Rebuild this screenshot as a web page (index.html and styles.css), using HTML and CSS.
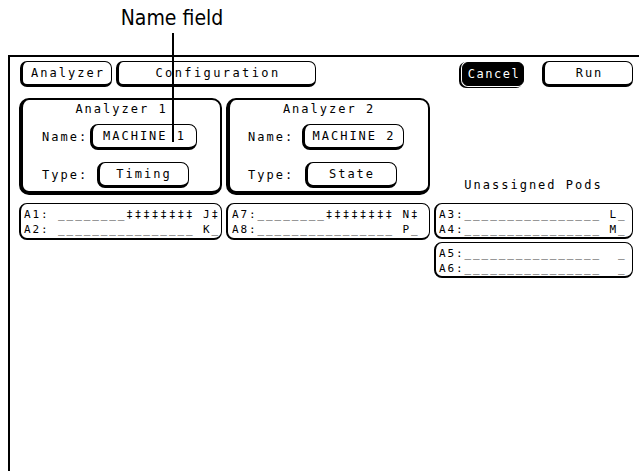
FILE: index.html
```html
<!DOCTYPE html>
<html>
<head>
<meta charset="utf-8">
<link rel="stylesheet" href="styles.css">
</head>
<body>
<div class="page">
  <div class="callout"><span class="callout-text">Name field</span></div>
  <div class="leader"></div>
  <div class="screen">
    <div class="topbar">
      <div class="btn btn-analyzer">Analyzer</div>
      <div class="btn btn-config">Configuration</div>
      <div class="spacer"></div>
      <div class="btn btn-cancel">Cancel</div>
      <div class="btn btn-run">Run</div>
    </div>
    <div class="grid">
      <div class="panel panel-1">
        <div class="panel-title">Analyzer 1</div>
        <div class="row row-name">
          <span class="lbl">Name:</span>
          <span class="field field-name">MACHINE 1</span>
        </div>
        <div class="row row-type">
          <span class="lbl">Type:</span>
          <span class="field field-type">Timing</span>
        </div>
      </div>
      <div class="panel panel-2">
        <div class="panel-title">Analyzer 2</div>
        <div class="row row-name">
          <span class="lbl">Name:</span>
          <span class="field field-name">MACHINE 2</span>
        </div>
        <div class="row row-type">
          <span class="lbl">Type:</span>
          <span class="field field-type">State</span>
        </div>
      </div>
      <div class="unassigned">Unassigned Pods</div>
      <div class="pods">
        <div class="pod-line">A1: ________‡‡‡‡‡‡‡‡ J‡</div>
        <div class="pod-line">A2: ________________ K_</div>
      </div>
      <div class="pods pods-mid">
        <div class="pod-line">A7:________‡‡‡‡‡‡‡‡ N‡</div>
        <div class="pod-line">A8:________________ P_</div>
      </div>
      <div class="podstack">
        <div class="pods">
          <div class="pod-line">A3:________________ L_</div>
          <div class="pod-line">A4:________________ M_</div>
        </div>
        <div class="pods pods-tall">
          <div class="pod-line">A5:________________  _</div>
          <div class="pod-line">A6:________________  _</div>
        </div>
      </div>
    </div>
  </div>
</div>
</body>
</html>
```

FILE: styles.css
```css
* { box-sizing: border-box; }

html, body {
  margin: 0;
  padding: 0;
  background: #fff;
}

.page {
  position: relative;
  width: 639px;
  height: 471px;
  overflow: hidden;
  color: #000;
  font-family: "DejaVu Sans Mono", "Liberation Mono", monospace;
  font-size: 12px;
  letter-spacing: 2px;
}

.callout {
  height: 55px;
  width: 344px;
  padding-top: 6px;
  text-align: center;
  font-family: "Liberation Sans Narrow", "DejaVu Sans Condensed", "Liberation Sans", sans-serif;
  font-size: 21px;
  line-height: 24px;
  letter-spacing: 0;
}

.leader {
  position: absolute;
  left: 172px;
  top: 33px;
  width: 2px;
  height: 109px;
  background: #000;
  z-index: 5;
}

.screen {
  margin-left: 8px;
  height: 416px;
  border-top: 2px solid #000;
  border-left: 2px solid #000;
}

.topbar {
  display: flex;
  padding: 4px 6px 0 10px;
  gap: 4px;
}

.spacer { flex: 1; }

.btn {
  height: 26px;
  display: flex;
  align-items: center;
  justify-content: center;
  background: #fff;
  border: 1px solid #000;
  border-left-width: 3px;
  border-bottom-width: 3px;
  border-radius: 7px;
  padding-left: 2px;
}

.btn-analyzer { width: 92px; }
.btn-config { width: 200px; letter-spacing: 2.4px; }
.btn-cancel {
  width: 62px;
  background: #000;
  color: #fff;
  border-width: 1px;
  border-radius: 6px;
  box-shadow: 0 0 0 1px #fff, -2px 1px 0 1px #000;
  margin-right: 14px;
  height: 24px;
  margin-top: 1px;
  letter-spacing: 1.5px;
}
.btn-run { width: 91px; }

.grid {
  display: grid;
  grid-template-columns: 203px 204px 199px;
  grid-template-rows: 97px 37px;
  column-gap: 4px;
  row-gap: 8px;
  margin-top: 11px;
  padding-left: 9px;
}

.panel {
  border: 2px solid #000;
  border-left-width: 4px;
  border-bottom-width: 4px;
  border-radius: 10px;
}

.panel-title {
  text-align: center;
  line-height: 18px;
}

.row {
  display: flex;
  align-items: center;
}

.row-name { margin-top: 6px; }
.row-type { margin-top: 12px; }

.panel-1 .row { padding-left: 19px; }
.panel-2 .row { padding-left: 18px; }

.panel-1 .row-name .lbl { width: 48px; }
.panel-1 .row-type .lbl { width: 55px; }
.panel-2 .row-name .lbl { width: 54px; }
.panel-2 .row-type .lbl { width: 57px; }

.field {
  height: 26px;
  display: flex;
  align-items: center;
  justify-content: center;
  border: 1px solid #000;
  border-left-width: 3px;
  border-bottom-width: 3px;
  border-radius: 8px;
}

.panel-1 .field-name { width: 107px; }
.panel-2 .field-name { width: 102px; }
.field-type { width: 92px; }

.unassigned {
  align-self: end;
  text-align: center;
  line-height: 16px;
  margin-bottom: 2px;
}

.pods {
  height: 37px;
  border: 1px solid #000;
  border-left-width: 2px;
  border-bottom-width: 2px;
  border-radius: 8px;
  padding: 3px 0 0 3px;
  font-size: 11px;
  letter-spacing: 1.9px;
}

.pods-mid { padding-left: 4px; }

.pods-tall {
  height: 40px;
  margin-top: 3px;
}

.pod-line {
  line-height: 15px;
  white-space: pre;
}

.podstack {
  display: flex;
  flex-direction: column;
}
```
